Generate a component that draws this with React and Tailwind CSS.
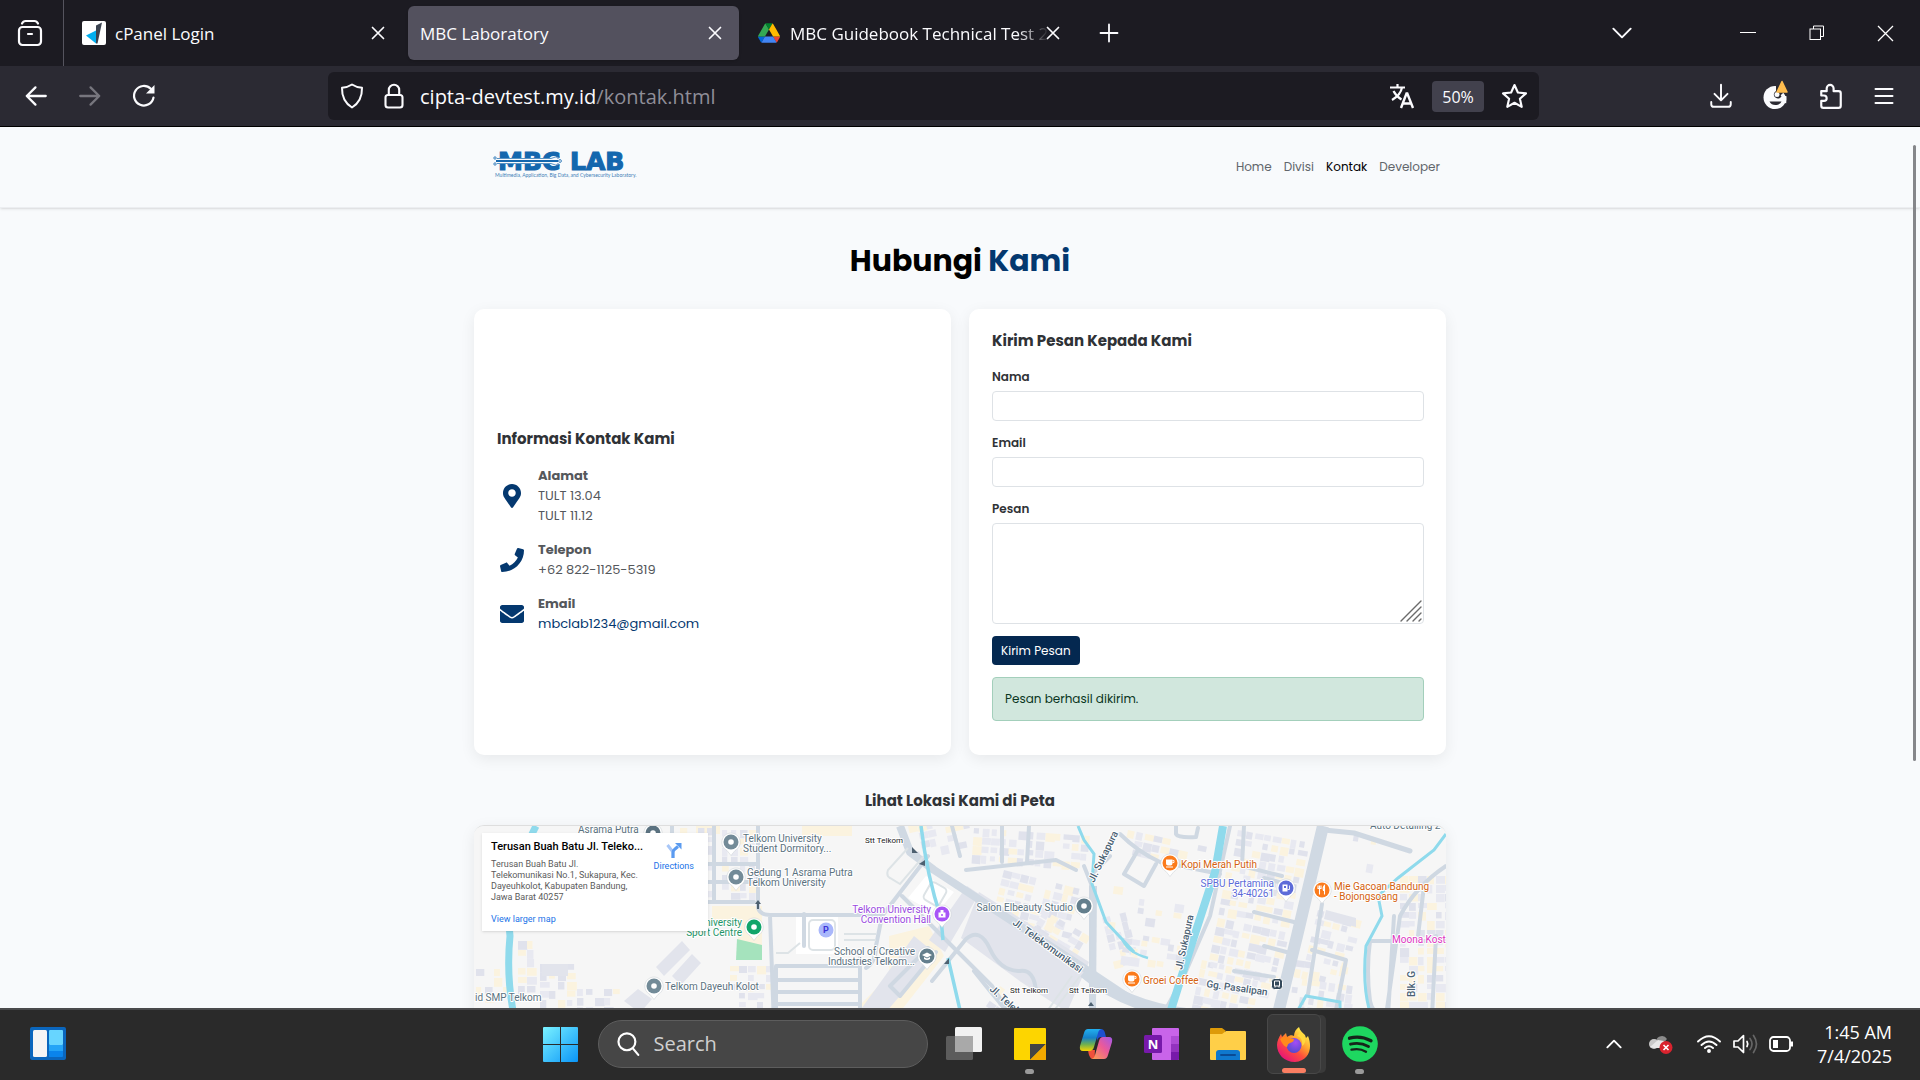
import React from "react";
import { FaMapMarkerAlt, FaPhone, FaEnvelope } from "react-icons/fa";

/* ---------- small helpers ---------- */

function Stroke({ size = 24, width = 2, children, className = "" }) {
  return (
    <svg
      width={size}
      height={size}
      viewBox="0 0 24 24"
      fill="none"
      stroke="currentColor"
      strokeWidth={width}
      strokeLinecap="round"
      strokeLinejoin="round"
      className={className}
      aria-hidden="true"
    >
      {children}
    </svg>
  );
}

function IconButton({ label, className = "", children }) {
  return (
    <button type="button" aria-label={label} className={"flex shrink-0 items-center justify-center " + className}>
      {children}
    </button>
  );
}

const CloseGlyph = () => (
  <Stroke size={24} width={1.7}>
    <path d="M6.5 6.5l11 11M17.5 6.5l-11 11" />
  </Stroke>
);

/* ---------- browser chrome ---------- */

function CpanelIcon() {
  return (
    <svg width="24" height="24" viewBox="0 0 24 24" aria-hidden="true">
      <rect width="24" height="24" rx="2" fill="#fff" />
      <path d="M4 14.500L14 9.500V22.500z" fill="#00aeef" />
      <path d="M14 4.500L20 1.500L15.500 22.500H14z" fill="#3b4350" />
    </svg>
  );
}

function DriveIcon() {
  return (
    <svg width="22" height="20" viewBox="0 0 87.3 78" aria-hidden="true">
      <path d="M6.600 66.850l3.850 6.650c.8 1.400 1.950 2.500 3.300 3.300L27.500 53H0c0 1.550.4 3.100 1.200 4.500z" fill="#0066da" />
      <path d="M43.650 25L29.900 1.200c-1.350.8-2.500 1.900-3.300 3.300L1.200 48.500C.4 49.900 0 51.450 0 53h27.500z" fill="#34a853" />
      <path d="M73.550 76.800c1.350-.8 2.500-1.900 3.300-3.300l1.600-2.750 7.650-13.250c.8-1.400 1.200-2.950 1.200-4.500H59.800l5.850 11.500z" fill="#ea4335" />
      <path d="M43.650 25L57.400 1.200C56.050.4 54.500 0 52.900 0H34.400c-1.600 0-3.150.45-4.500 1.200z" fill="#00832d" />
      <path d="M59.800 53H27.500L13.750 76.800c1.350.8 2.900 1.200 4.500 1.200h50.800c1.600 0 3.150-.45 4.500-1.200z" fill="#4285f4" />
      <path d="M73.400 26.500l-12.700-22c-.8-1.400-1.950-2.500-3.300-3.300L43.650 25 59.800 53h27.450c0-1.550-.4-3.100-1.200-4.500z" fill="#ffba00" />
    </svg>
  );
}

function TabBar() {
  return (
    <div className="flex h-[66px] items-center bg-[#1c1b22] text-[17px] text-[#fbfbfe]">
      <div className="flex h-full w-16 items-center justify-center border-r border-[#55545e] pr-1">
        <IconButton label="Recent tabs">
          <svg width="26" height="28" viewBox="0 0 26 28" fill="none" stroke="currentColor" strokeWidth="2.200" strokeLinecap="round" aria-hidden="true">
            <rect x="2" y="8" width="22" height="18" rx="3.500" />
            <path d="M5 4.500c1-2 2-2.500 3.500-2.500h9c1.500 0 2.500.5 3.500 2.500M11 15h4" />
          </svg>
        </IconButton>
      </div>
      <div className="flex h-[54px] w-[344px] items-center pl-[18px] pr-[18px]">
        <CpanelIcon />
        <span className="ml-[9px] flex-1 truncate pt-px">cPanel Login</span>
        <IconButton label="Close tab"><CloseGlyph /></IconButton>
      </div>
      <div className="flex h-[54px] w-[331px] items-center rounded-md bg-[#53515e] pl-3 pr-3 shadow">
        <span className="flex-1 truncate pt-px">MBC Laboratory</span>
        <IconButton label="Close tab"><CloseGlyph /></IconButton>
      </div>
      <div className="flex h-[54px] w-[333px] items-center pl-[19px] pr-[7px]">
        <DriveIcon />
        <span className="-mr-2 ml-[10px] w-0 flex-1 overflow-hidden whitespace-nowrap pt-px [mask-image:linear-gradient(to_right,black_88%,transparent_100%)]">
          MBC Guidebook Technical Test 2
        </span>
        <IconButton label="Close tab"><CloseGlyph /></IconButton>
      </div>
      <IconButton label="New tab" className="ml-[25px]">
        <Stroke size={24} width={1.8}><path d="M12 3.500v17M3.500 12h17" /></Stroke>
      </IconButton>
      <div className="ml-auto flex items-center">
        <IconButton label="List all tabs" className="w-[46px]">
          <Stroke size={26} width={1.800}><path d="M4 8l8 8 8-8" /></Stroke>
        </IconButton>
        <IconButton label="Minimize" className="ml-[68px] w-[69px]">
          <svg width="16" height="16" aria-hidden="true"><path d="M0 7.500h16" stroke="#fff" /></svg>
        </IconButton>
        <IconButton label="Restore" className="w-[69px]">
          <svg width="16" height="16" fill="none" stroke="#fff" aria-hidden="true">
            <rect x="1" y="4" width="10.500" height="10.500" />
            <path d="M4.500 4V1H14.500V11.500H11.500" />
          </svg>
        </IconButton>
        <IconButton label="Close window" className="w-[69px]">
          <svg width="17" height="17" fill="none" stroke="#fff" strokeWidth="1.300" aria-hidden="true"><path d="M1 1l15 15M16 1L1 16" /></svg>
        </IconButton>
      </div>
    </div>
  );
}

function Toolbar() {
  return (
    <div className="flex h-[61px] items-center border-b border-black bg-[#2b2a33] text-[#fbfbfe]">
      <div className="flex w-[328px] shrink-0 items-center gap-[28px] pl-[23px]">
        <IconButton label="Back"><Stroke size={26} width={2.100}><path d="M21 12H3.500M11.500 4L3.500 12l8 8" /></Stroke></IconButton>
        <IconButton label="Forward" className="text-[#77767e]"><Stroke size={26} width={2.100}><path d="M3 12h17.500M12.500 4l8 8-8 8" /></Stroke></IconButton>
        <IconButton label="Reload">
          <svg width="26" height="26" viewBox="0 0 26 26" fill="none" stroke="currentColor" strokeWidth="2.200" strokeLinecap="round" aria-hidden="true">
            <path d="M22.500 14.500a9.800 9.800 0 1 1-2.700-8.700" />
            <path d="M23.500 2v8.500H15z" fill="currentColor" stroke="none" />
          </svg>
        </IconButton>
      </div>
      <div className="flex h-12 w-[1211px] shrink items-center rounded-md bg-[#1c1b22] pl-[12px] pr-[11px]">
        <svg width="24" height="26" viewBox="0 0 24 26" fill="none" stroke="currentColor" strokeWidth="2" strokeLinejoin="round" className="shrink-0" aria-hidden="true">
          <path d="M12 1.500c3 2 6 3 10 3.300.2 8.500-2.500 15.200-10 19.700C4.500 20 1.800 13.300 2 4.800 6 4.500 9 3.500 12 1.500z" />
        </svg>
        <svg width="20" height="26" viewBox="0 0 20 26" fill="none" stroke="currentColor" strokeWidth="2.100" className="ml-[20px] shrink-0" aria-hidden="true">
          <rect x="1.500" y="12" width="17" height="12.500" rx="2.500" />
          <path d="M4.800 12V7a5.200 5.200 0 0 1 10.400 0v5" />
        </svg>
        <p className="ml-4 flex-1 truncate pt-0.5 text-[20px]">
          cipta-devtest.my.id<span className="text-[#8f8e98]">/kontak.html</span>
        </p>
        <IconButton label="Translate page">
          <svg width="26" height="26" viewBox="0 0 26 26" fill="none" stroke="currentColor" strokeWidth="2.200" aria-hidden="true">
            <path d="M1 4.500h15M8.500 1v3.500M3 17C8 14 12 10 13 4.500M4.500 8c2 4 4.500 6.500 8 8.500" />
            <path d="M12 25l5.500-14.500h.8L24 25M14 20.500h8" strokeWidth="2.400" />
          </svg>
        </IconButton>
        <button type="button" className="ml-[17px] h-[31px] w-[52px] rounded bg-[#42414d] pt-px text-base">50%</button>
        <IconButton label="Bookmark page" className="ml-[17px]">
          <Stroke size={27} width={1.900}>
            <path d="M12 1.800l3 6.600 7.200.8-5.400 4.800 1.600 7.200L12 17.600l-6.400 3.600 1.600-7.200-5.400-4.800 7.200-.8z" />
          </Stroke>
        </IconButton>
      </div>
      <div className="ml-auto flex items-center gap-[28px] pr-[24px]">
        <IconButton label="Downloads"><Stroke size={26} width={1.800}><path d="M12 1.500v14M6 10l6 6 6-6M3 17.500v2c0 1.500 1 2.500 2.500 2.500h13c1.500 0 2.500-1 2.500-2.500v-2" /></Stroke></IconButton>
        <IconButton label="Extension">
          <svg width="28" height="32" viewBox="0 0 28 32" aria-hidden="true">
            <circle cx="13" cy="17.500" r="11.500" fill="#fbfbfe" />
            <path d="M14 5v6a4 4 0 1 0 5 6l1-1h6V5z" fill="#2b2a33" />
            <circle cx="15" cy="14.500" r="2.500" fill="#fbfbfe" />
            <path d="M7.500 21.500h12c-2 4.500-10 5-12 0z" fill="#2b2a33" />
            <path d="M20 14a11 11 0 0 1 2.500 9" stroke="#fbfbfe" strokeWidth="3.500" fill="none" />
            <path d="M20 1.500l5 10.500h-10z" fill="#ffbd4f" stroke="#ffbd4f" strokeWidth="1.500" strokeLinejoin="round" />
          </svg>
        </IconButton>
        <IconButton label="Extensions">
          <Stroke size={26} width={2}>
            <path d="M3 7.500h5V5a3.200 3.200 0 0 1 6.400 0v2.500H19a2 2 0 0 1 2 2V21a2 2 0 0 1-2 2H5a2 2 0 0 1-2-2v-4.500h2.500a2.500 2.500 0 0 0 0-5H3z" />
          </Stroke>
        </IconButton>
        <IconButton label="Menu"><Stroke size={24} width={2}><path d="M3.500 5h17M3.500 12h17M3.500 19h17" /></Stroke></IconButton>
      </div>
    </div>
  );
}

/* ---------- contact page ---------- */

function MbcLogo() {
  return (
    <svg width="146" height="30" viewBox="0 0 146 30" className="overflow-visible" role="img" aria-label="MBC LAB">
      <g fill="#1467ae" stroke="#1467ae" strokeWidth="1.200" fontFamily="'DejaVu Sans', sans-serif" fontWeight="700">
        <text x="5" y="20" fontSize="25">MBC</text>
        <text x="77" y="20" fontSize="25">LAB</text>
      </g>
      <path d="M3 11h62" stroke="#f8fafc" strokeWidth="6" />
      <g stroke="#1467ae" fill="none">
        <path d="M3 11h62" strokeWidth="2" />
        <path d="M4 8.500h54l6-2M4 13.500h54l6 2" strokeWidth=".7" />
        <circle cx="2" cy="8" r="1.200" strokeWidth=".8" />
        <circle cx="2" cy="14" r="1.200" strokeWidth=".8" />
        <circle cx="67" cy="11" r="1.400" strokeWidth=".8" fill="#f8fafc" />
        <circle cx="65" cy="7" r="1.200" strokeWidth=".8" />
        <circle cx="65" cy="15" r="1.200" strokeWidth=".8" />
      </g>
      <text x="2" y="27" fontSize="5" fill="#3f7fb8" fontFamily="Lato, sans-serif">
        Multimedia, Application, Big Data, and Cybersecurity Laboratory.
      </text>
    </svg>
  );
}

function SiteHeader() {
  return (
    <header className="h-[81px] shrink-0 border-b border-[#eceef1] shadow-sm">
      <div className="mx-auto flex h-full max-w-[960px] items-center justify-between pl-[13px]">
        <a href="#home" className="mb-1"><MbcLogo /></a>
        <nav className="flex gap-3 text-[12px] text-[#61666b]">
          <a href="#home">Home</a>
          <a href="#divisi">Divisi</a>
          <a href="#kontak" className="text-black">Kontak</a>
          <a href="#developer">Developer</a>
        </nav>
      </div>
    </header>
  );
}

function ContactRow({ icon, title, children }) {
  return (
    <div className="flex items-center gap-[12px]">
      <span className="flex w-[29px] justify-center text-[24px] text-[#04386f]">{icon}</span>
      <div className="text-[13px] leading-5 text-[#55585c]">
        <p className="font-bold">{title}</p>
        {children}
      </div>
    </div>
  );
}

function Field({ id, label, type }) {
  return (
    <div className="mb-3">
      <label htmlFor={id} className="mb-1 block text-[12px] font-semibold leading-5">{label}</label>
      <input id={id} type={type} className="block h-[30px] w-full rounded border border-[#dee2e6] bg-white px-2 text-[12px]" />
    </div>
  );
}

function ContactCards() {
  return (
    <div className="grid grid-cols-2 gap-[18px] text-[#2f3236]">
      <section className="flex flex-col justify-center rounded-[10px] bg-white pb-[2px] pl-[23px] pr-[22px] shadow-[0_4px_15px_rgba(0,0,0,0.07)]">
        <h2 className="mb-[17px] text-[15px] font-bold leading-5">Informasi Kontak Kami</h2>
        <div className="flex flex-col gap-[14px]">
          <ContactRow icon={<FaMapMarkerAlt />} title="Alamat">
            <p>TULT 13.04</p>
            <p>TULT 11.12</p>
          </ContactRow>
          <ContactRow icon={<FaPhone />} title="Telepon">
            <p>+62 822-1125-5319</p>
          </ContactRow>
          <ContactRow icon={<FaEnvelope />} title="Email">
            <a href="mailto:mbclab1234@gmail.com" className="text-[#04386f]">mbclab1234@gmail.com</a>
          </ContactRow>
        </div>
      </section>
      <section className="rounded-[10px] bg-white pb-[34px] pl-[23px] pr-[22px] pt-[22px] shadow-[0_4px_15px_rgba(0,0,0,0.07)]">
        <h2 className="mb-4 text-[15px] font-bold leading-5">Kirim Pesan Kepada Kami</h2>
        <form onSubmit={(e) => e.preventDefault()}>
          <Field id="nama" label="Nama" type="text" />
          <Field id="email" label="Email" type="email" />
          <label htmlFor="pesan" className="mb-1 block text-[12px] font-semibold leading-5">Pesan</label>
          <div className="relative">
            <textarea id="pesan" className="block h-[101px] w-full resize-none rounded border border-[#dee2e6] bg-white p-2 text-[12px]" />
            <svg width="22" height="22" viewBox="0 0 22 22" stroke="#6b6b6b" strokeWidth="1.400" strokeLinecap="round" className="absolute bottom-[2px] right-[2px]" aria-hidden="true">
              <path d="M1 21L21 1M7 21L21 7M13 21l8-8M19 21l2-2" />
            </svg>
          </div>
          <button type="submit" className="mt-3 flex h-[29px] items-center rounded bg-[#042850] px-[9px] text-[12px] text-white">Kirim Pesan</button>
        </form>
        <p role="status" className="mt-3 flex h-11 items-center rounded border border-[#a3cfbb] bg-[#d1e7dd] px-3 text-[12px] text-[#0a3622]">Pesan berhasil dikirim.</p>
      </section>
    </div>
  );
}

/* ---------- map ---------- */

function buildings(x, y, w, h, angle, seed, density) {
  const out = [];
  let s = seed;
  const rnd = () => {
    s = (s * 16807) % 2147483647;
    return s / 2147483647;
  };
  for (let j = 0; j < h; j += 9) {
    for (let i = 0; i < w; i += 9) {
      const keep = rnd() < density;
      const bw = 5 + rnd() * 5;
      const bh = 5 + rnd() * 4;
      const tint = rnd();
      if (keep) {
        out.push(
          <rect
            key={i + "-" + j}
            x={i}
            y={j}
            width={bw}
            height={bh}
            fill={tint < 0.35 ? "#fbf3df" : tint < 0.7 ? "#e8e9f1" : "#e0e2ec"}
          />
        );
      }
    }
  }
  return <g key={seed} transform={`translate(${x} ${y}) rotate(${angle})`}>{out}</g>;
}

function Pin({ x, y, color, children }) {
  return (
    <g transform={`translate(${x} ${y})`}>
      <path d="M0 13.500L-4 8.500A9.200 9.200 0 1 1 4 8.500z" fill="#fff" stroke="#c9ced3" strokeWidth=".5" />
      <circle r="7.500" fill={color} />
      {children || <circle r="2.800" fill="#fff" />}
    </g>
  );
}

const Cup = () => (
  <g>
    <path d="M-4-3.500h6.500v4a2 2 0 0 1-2 2h-2.500a2 2 0 0 1-2-2zM-4 3.500h7v1h-7z" fill="#fff" />
    <path d="M2.500-2.500h1.500v2h-1.500" fill="none" stroke="#fff" strokeWidth=".9" />
  </g>
);

function Label({ x, y, color, lines, anchor = "start", size = 10, rotate = 0, weight = 400 }) {
  return (
    <text
      transform={`translate(${x} ${y}) rotate(${rotate})`}
      fill={color}
      fontSize={size}
      fontWeight={weight}
      textAnchor={anchor}
      stroke="#fff"
      strokeWidth="2"
      strokeLinejoin="round"
      paintOrder="stroke"
    >
      {lines.map((line, i) => (
        <tspan key={line} x="0" y={i * 10}>{line}</tspan>
      ))}
    </text>
  );
}

const GREY = "#5b7280";
const ROAD = "#4a6173";

function MapCanvas() {
  return (
    <svg viewBox="0 0 972 225" preserveAspectRatio="xMidYMin slice" className="block h-[225px] w-full" fontFamily="Roboto, sans-serif" role="img" aria-label="Map">
      <rect width="972" height="225" fill="#f6f6f6" />
      {/* plots and sports fields */}
      <path d="M222 0h24v8h-24zM238 80h50v42h-24V98h-26zM328 0h50v10h-50z" fill="#fbf3df" />
      <path d="M415 110l40-10 15 30-55 70-30-20 30-30z" fill="#fbf3df" />
      <path d="M263 113l25 6v15h-26z" fill="#a5e3bd" />
      <path d="M322 90h42v38h-42z" fill="#fff" />
      <path d="M452 50l28 16-18 22-28-16z" fill="#fff" />
      {/* housing blocks */}
      {buildings(206, 2, 34, 70, 0, 11, 0.6)}
      {buildings(248, 4, 32, 66, 0, 23, 0.7)}
      {buildings(44, 115, 14, 60, 0, 37, 0.8)}
      {buildings(66, 138, 30, 40, 0, 41, 0.8)}
      {buildings(2, 143, 30, 34, 0, 43, 0.5)}
      {buildings(103, 163, 40, 24, 0, 47, 0.7)}
      {buildings(256, 140, 44, 50, 0, 53, 0.8)}
      {buildings(434, 0, 60, 30, -12, 59, 0.5)}
      {buildings(500, 2, 110, 36, 4, 61, 0.9)}
      {buildings(530, 44, 80, 46, 14, 67, 0.9)}
      {buildings(570, 84, 50, 28, 30, 71, 0.9)}
      {buildings(628, 92, 26, 50, -14, 73, 0.8)}
      {buildings(654, 4, 80, 26, 12, 79, 0.8)}
      {buildings(640, 60, 70, 60, 8, 83, 0.2)}
      {buildings(650, 112, 56, 22, 8, 89, 0.7)}
      {buildings(764, 4, 70, 40, 10, 97, 0.9)}
      {buildings(752, 46, 72, 44, 10, 101, 0.8)}
      {buildings(744, 92, 72, 50, 12, 103, 0.9)}
      {buildings(728, 134, 66, 56, 12, 107, 0.8)}
      {buildings(844, 84, 40, 66, 14, 109, 0.7)}
      {buildings(822, 134, 60, 50, 8, 113, 0.6)}
      {buildings(926, 50, 50, 140, 0, 127, 0.8)}
      {buildings(526, 160, 80, 30, 35, 131, 0.4)}
      {buildings(880, 8, 70, 40, 10, 137, 0.08)}
      {/* large campus buildings */}
      <g fill="#e2e4ec">
        <path d="M208 115l8 9-26 26-8-9zM218 128l9 9-20 22-9-9z" />
        <path d="M493 60l12 8-34 58-16-12zM505 66l110 70-22 50-46-30-60-44z" />
        <path d="M440 110l22 18-62 72-18-10z" />
        <path d="M150 175l14-12 14 10-12 14zM68 138h26v12h-26zM852 84l30 8v9l-32-8z" />
      </g>
      {/* streets */}
      <g fill="none" stroke="#cfd8e2" strokeWidth="4" strokeLinejoin="round" strokeLinecap="round">
        <path d="M198 0v34M240 0v76M208 38h74M206 56h72M232 76h48M284 0v82q2 7 12 7h112M296 90l4 110" />
        <path d="M302 140h82M302 154h82M302 166h82M302 178h82M386 132v60M302 140v50" />
        <path d="M330 88v32M408 90l46-60M408 90l-6 30q0 16-10 22M428 70l90 90M440 82l-12-12M518 160l26 40M454 122l-38 38 10 10 36-44" />
        <path d="M492 113q14-12 24 10t30 22q14-2 16 20M500 145l16 20 30 36M492 113l-34 42" strokeWidth="4" />
        <path d="M478 0l8 30M492 44l90-10 20 10M528 0v36M555 0l-2 36M636 30l-20 20M617 60v110M610 40l8 20M617 170v20" />
        <path d="M646 8q18 18 40 28l60 12M664 24l-14 24 20 12 12-22M702 0v8q2 4 20 3l2-9M756 0l-20 90-26 60-22 40" />
        <path d="M790 52l30 8M780 86l40 10M790 120l30 8M760 145l40 6M770 0l-2 40 40 10M848 78l-14 90M838 124l34 10-10 50" />
        <path d="M850 4l30 3 56 18" strokeWidth="5" />
        <path d="M972 40q-30 20-46 50l-14 100M896 115q-4 30 0 60 4 20 30 14M896 115h76M920 90l-6 100M950 60l-6 50M962 110l-4 80" />
      </g>
      {/* main roads */}
      <g fill="none" stroke="#d0d9e3" strokeLinejoin="round">
        <path d="M426 0l10 26 24 18 150 98 60 40" strokeWidth="8" />
        <path d="M620 60l-1 122" strokeWidth="6" />
        <path d="M849 0l-26 110-22 90" strokeWidth="12" />
        <path d="M610 146q40 34 102 42" strokeWidth="12" />
      </g>
      {/* car parks */}
      <g fill="none" stroke="#dde3e6" strokeWidth="2">
        <rect x="335" y="94" width="26" height="30" rx="4" />
        <rect x="452" y="58" width="18" height="20" rx="4" transform="rotate(30 461 68)" />
        <path d="M434 22l-20 22q-2 6 2 8l10 6 24-28M370 108h32M370 114h32M302 127h12l12-10M606 150l-30 40M598 150l-24 34" />
      </g>
      {/* waterways */}
      <g fill="none" stroke="#8fdaec">
        <path d="M62 0Q30 60 36 110q-4 40 4 80" strokeWidth="7" />
        <path d="M447 0q6 50 20 92l2 22M474 132l12 52" strokeWidth="3.500" />
        <path d="M604 0l6 14 10 14-2 30 14 38 28 30" strokeWidth="3" />
        <path d="M749 0l-8 46-22 68-22 70" strokeWidth="8" />
        <path d="M648 112q4 14 26 20" strokeWidth="2.500" />
        <path d="M972 8l-12 16-36 28-20 18 4 20-16 30q-4 40 4 66M824 184l8-14 34 6v20" strokeWidth="3" />
      </g>
      <g fill="#4d6070">
        <path d="M284 74l3 4h-2v5h-2v-5h-2zM438 21l6 6-6 0zM451 40v-6l-6 4zM475 132v6l-5 0zM617 176l3 4h-6z" />
      </g>

      <Label x={104} y={7} color={GREY} lines={["Asrama Putra"]} size={10} />
      <Pin x={179} y={7} color={GREY} />
      <Pin x={257} y={16} color="#738b98" />
      <Label x={269} y={16} color={GREY} lines={["Telkom University", "Student Dormitory..."]} />
      <Pin x={262} y={51} color="#738b98" />
      <Label x={273} y={50} color={GREY} lines={["Gedung 1 Asrama Putra", "Telkom University"]} />
      <Label x={268} y={100} color="#1e9568" lines={["University", "Sport Centre"]} anchor="end" />
      <Pin x={280} y={101} color="#12a56b" />
      <Pin x={180} y={160} color="#738b98" />
      <Label x={191} y={164} color={GREY} lines={["Telkom Dayeuh Kolot"]} />
      <Label x={1} y={175} color={GREY} lines={["id SMP Telkom"]} />
      <Label x={391} y={17} color="#222" lines={["Stt Telkom"]} size={8} />
      <Label x={457} y={87} color="#9a4be0" lines={["Telkom University", "Convention Hall"]} anchor="end" />
      <Pin x={468} y={88} color="#a855f7">
        <path d="M-3.500-1.500h7v5h-7zM-1.500-4h3v2.500h-3z" fill="#fff" />
        <circle cy="1" r="1" fill="#a855f7" />
      </Pin>
      <circle cx="352" cy="104" r="8.500" fill="#fff" />
      <circle cx="352" cy="104" r="7.500" fill="#aab8fb" />
      <text x="352" y="107" fontSize="9" fontWeight="700" textAnchor="middle" fill="#3b32d8">P</text>
      <Label x={441} y={129} color={GREY} lines={["School of Creative", "Industries Telkom..."]} anchor="end" />
      <Pin x={453} y={130} color="#647f8d">
        <path d="M-5-1L0-3.500 5-1 0 1.500zM-3 1v2q3 2 6 0V1L0 2.500z" fill="#fff" />
      </Pin>
      <Label x={599} y={85} color={GREY} lines={["Salon Elbeauty Studio"]} anchor="end" />
      <Pin x={610} y={80} color="#647f8d" />
      <Label x={620} y={57} color={ROAD} lines={["Jl. Sukapura"]} rotate={-64} weight={500} />
      <Label x={538} y={98} color={ROAD} lines={["Jl. Telekomunikasi"]} rotate={36} weight={500} />
      <Label x={515} y={164} color={ROAD} lines={["Jl. Telekomunikasi"]} rotate={42} weight={500} />
      <Label x={536} y={167} color="#222" lines={["Stt Telkom"]} size={8} />
      <Label x={595} y={167} color="#222" lines={["Stt Telkom"]} size={8} />
      <Pin x={696} y={37} color="#fb7b1c"><Cup /></Pin>
      <Label x={707} y={42} color="#d4620f" lines={["Kopi Merah Putih"]} />
      <Label x={800} y={61} color="#5c6bd8" lines={["SPBU Pertamina", "34-40261"]} anchor="end" />
      <Pin x={812} y={62} color="#5c6bd8">
        <path d="M-3.500-3.500h5v7h-5z" fill="#fff" />
        <path d="M-2-2h2v2h-2z" fill="#5c6bd8" />
        <path d="M1.500 1.500h2v-4" fill="none" stroke="#fff" strokeWidth=".9" />
      </Pin>
      <Pin x={848} y={64} color="#fb7b1c">
        <path d="M-2.500-4.500v9M-4-4.500v3h3v-3M2.500 4.500v-9q-2 2-1 5h1" fill="none" stroke="#fff" strokeWidth="1.100" />
      </Pin>
      <Label x={860} y={64} color="#d4620f" lines={["Mie Gacoan Bandung", "- Bojongsoang"]} />
      <Label x={896} y={3} color={GREY} lines={["Auto Detailing 2"]} />
      <Label x={918} y={117} color="#dd35c1" lines={["Moona Kost"]} />
      <Pin x={658} y={153} color="#fb7b1c"><Cup /></Pin>
      <Label x={669} y={158} color="#d4620f" lines={["Groei Coffee"]} />
      <Label x={732} y={161} color={ROAD} lines={["Gg. Pasalipan"]} rotate={8} weight={500} />
      <Label x={708} y={144} color={ROAD} lines={["Jl. Sukapura"]} rotate={-78} weight={500} />
      <Label x={941} y={171} color={ROAD} lines={["Blk. G"]} rotate={-90} weight={500} />
      <g transform="translate(803 158)">
        <rect x="-5.500" y="-5.500" width="11" height="11" rx="3" fill="#34495a" stroke="#fff" />
        <path d="M-2.500-3h5v5h-5zM-2 2v1.500M2 2v1.500" fill="none" stroke="#fff" strokeWidth="1" />
      </g>
    </svg>
  );
}

function MapSection() {
  return (
    <section className="mt-9">
      <h2 className="mb-[14px] text-center text-[15px] font-bold leading-5 text-[#2f3236]">Lihat Lokasi Kami di Peta</h2>
      <div className="relative overflow-hidden rounded-[10px] border-t border-[#dedede] font-['Roboto',sans-serif] shadow-[0_4px_15px_rgba(0,0,0,0.08)]">
        <MapCanvas />
        <div className="absolute left-2 top-[7px] flex w-[226px] justify-between bg-white pb-[6px] pl-[9px] pr-[14px] pt-[7px] shadow">
          <div className="w-[152px] whitespace-nowrap text-[9px] leading-[11px] text-[#5b5b5b]">
            <p className="text-[11px] font-medium leading-[13px] text-black">Terusan Buah Batu Jl. Teleko...</p>
            <p className="mt-[6px]">
              Terusan Buah Batu Jl.<br />
              Telekomunikasi No.1, Sukapura, Kec.<br />
              Dayeuhkolot, Kabupaten Bandung,<br />
              Jawa Barat 40257
            </p>
            <a href="#map" className="mt-[11px] block text-[#1a73e8]">View larger map</a>
          </div>
          <a href="#directions" className="flex flex-col items-center gap-[3px] pt-[2px] text-[9px] leading-[11px] text-[#1a73e8]">
            <svg width="16" height="16" viewBox="0 0 16 16" fill="none" aria-hidden="true">
              <path d="M7 16V10L1.500 3" stroke="#a8c7f8" strokeWidth="3" />
              <path d="M7 16v-5.500q0-2 2-3.500l3-2.500" stroke="#5b9bf0" strokeWidth="3" />
              <path d="M9 1h6.500v6.500z" fill="#5b9bf0" />
            </svg>
            Directions
          </a>
        </div>
      </div>
    </section>
  );
}

/* ---------- taskbar ---------- */

function WidgetsIcon() {
  return (
    <svg width="36" height="34" viewBox="0 0 36 34" aria-hidden="true">
      <rect width="36" height="33" rx="2" fill="#0a66bd" />
      <rect x="3" y="3" width="14" height="27" rx="1.500" fill="#f5f5f5" />
      <rect x="19" y="3" width="14" height="15" rx="1" fill="#67d5ff" />
      <path d="M19 18h14v6H19z" fill="#23a4f7" />
      <path d="M19 24h14v5q0 1-1 1H19z" fill="#0a84ec" />
    </svg>
  );
}

function StartIcon() {
  return (
    <svg width="35" height="35" viewBox="0 0 35 35" aria-hidden="true">
      <defs>
        <linearGradient id="start" x1="0" y1="0" x2="1" y2="1">
          <stop offset="0" stopColor="#7af2ff" />
          <stop offset="1" stopColor="#0a95f8" />
        </linearGradient>
      </defs>
      <path d="M0 1q0-1 1-1h16v17H0zM18 0h16q1 0 1 1v16H18zM0 18h17v17H1q-1 0-1-1zM18 18h17v16q0 1-1 1H18z" fill="url(#start)" />
    </svg>
  );
}

function TaskViewIcon() {
  return (
    <svg width="36" height="34" viewBox="0 0 36 34" aria-hidden="true">
      <rect x="9" y="0" width="27" height="25" rx="1.500" fill="#f1f1f1" />
      <rect x="0" y="9" width="27" height="24" rx="1.500" fill="#5c5c5c" />
      <path d="M9 9h18v16H9z" fill="#a9a9a9" />
    </svg>
  );
}

function NotesIcon() {
  return (
    <svg width="32" height="32" viewBox="0 0 32 32" aria-hidden="true">
      <rect width="32" height="32" rx="1" fill="#fdd500" />
      <path d="M16 16h16L16 32z" fill="#444" />
      <path d="M32 16v15q0 1-1 1H16z" fill="#f2a900" />
    </svg>
  );
}

function CopilotIcon() {
  return (
    <svg width="34" height="32" viewBox="0 0 34 32" aria-hidden="true">
      <defs>
        <linearGradient id="cpA" x1="0" y1="0" x2="0" y2="1">
          <stop offset="0" stopColor="#22b0f0" />
          <stop offset=".4" stopColor="#1680c8" />
          <stop offset=".7" stopColor="#6fb050" />
          <stop offset="1" stopColor="#f5d400" />
        </linearGradient>
        <linearGradient id="cpB" x1="1" y1="0" x2="0" y2="1">
          <stop offset="0" stopColor="#a258e8" />
          <stop offset=".45" stopColor="#ec5a98" />
          <stop offset="1" stopColor="#fba54c" />
        </linearGradient>
      </defs>
      <path d="M17 1h5q3 0 4 4l1 4h-5q-3 0-4 4z" fill="#1d4fd0" />
      <path d="M9 22h7q-1 8 2 9h-5q-3-1-4-9z" fill="#f0503c" />
      <path d="M9 1h14q-3 0-4 4l-4 14q-1 4-5 4H4q-4 0-3-5L5 5q1-4 4-4z" fill="url(#cpA)" />
      <path d="M25 31H12q3 0 4-4l4-14q1-4 4-4h6q4 0 3 5l-4 13q-1 4-4 4z" fill="url(#cpB)" />
    </svg>
  );
}

function OneNoteIcon() {
  return (
    <svg width="36" height="32" viewBox="0 0 36 32" aria-hidden="true">
      <rect x="8" width="27" height="32" rx="1" fill="#c964ea" />
      <path d="M27 8h8v8h-8z" fill="#ae4bd5" />
      <path d="M27 16h8v8h-8z" fill="#9332bf" />
      <path d="M27 24h8v7q0 1-1 1h-7z" fill="#7719aa" />
      <rect x="0" y="7" width="18" height="18" rx="1.500" fill="#7719aa" />
      <text x="9" y="20.500" fontSize="13" fontWeight="700" fill="#fff" textAnchor="middle" fontFamily="'Open Sans', sans-serif">N</text>
    </svg>
  );
}

function ExplorerIcon() {
  return (
    <svg width="36" height="32" viewBox="0 0 36 32" aria-hidden="true">
      <path d="M0 1q0-1 1-1h11l4 3h-1v6H0z" fill="#dd9a08" />
      <path d="M0 6h12l4-3h19q1 0 1 1v27q0 1-1 1H1q-1 0-1-1z" fill="#ffcf48" />
      <path d="M6 32v-7q0-3 3-3h18q3 0 3 3v7z" fill="#0f78ce" />
      <path d="M11 27h14" stroke="#0a4a94" strokeWidth="2" strokeLinecap="round" />
    </svg>
  );
}

function FirefoxIcon() {
  return (
    <svg width="34" height="35" viewBox="0 0 34 35" aria-hidden="true">
      <defs>
        <linearGradient id="ffA" x1=".85" y1=".1" x2=".2" y2=".95">
          <stop offset="0" stopColor="#fff44f" />
          <stop offset=".35" stopColor="#ffa22e" />
          <stop offset=".6" stopColor="#ff4f3c" />
          <stop offset="1" stopColor="#e6107c" />
        </linearGradient>
        <radialGradient id="ffB" cx=".6" cy=".3" r=".8">
          <stop offset="0" stopColor="#a44df5" />
          <stop offset="1" stopColor="#4a49c9" />
        </radialGradient>
      </defs>
      <path d="M22 0c1 4 4 6 6 8l1 3 2-2c5 12 1 25-13 26C7 35 0 27 0 18c0-4 2-8 4-11l1 3 4-4 1 4c3-2 5-2 7-1 0-4 2-7 5-9z" fill="url(#ffA)" />
      <circle cx="17" cy="18.500" r="7.500" fill="url(#ffB)" />
      <path d="M3 12c4-3 6-3 9-1l5 1c0 2-1 3-4 4-3 1-2 3-3 4-3 0-5-4-7-8z" fill="#ff8a1c" />
      <path d="M20 9c4 1 6 5 5 10 5-3 4-10-1-14z" fill="#ffd93c" />
    </svg>
  );
}

function SpotifyIcon() {
  return (
    <svg width="36" height="36" viewBox="0 0 36 36" fill="none" stroke="#16241a" strokeLinecap="round" aria-hidden="true">
      <circle cx="18" cy="18" r="17.800" fill="#1ed760" stroke="none" />
      <path d="M7.500 12.200q11-3 21.500 2.600" strokeWidth="3.300" />
      <path d="M8.500 18.200q9.500-2.500 18 2.300" strokeWidth="2.800" />
      <path d="M9.500 23.700q8-2 14.500 2" strokeWidth="2.300" />
    </svg>
  );
}

function TaskApp({ label, running, children }) {
  return (
    <button type="button" aria-label={label} className="relative flex h-full w-[54px] shrink-0 items-center justify-center">
      {children}
      {running ? <span className="absolute bottom-0 h-[5px] w-[9px] rounded-full bg-[#9a9a9a]" /> : null}
    </button>
  );
}

function Taskbar() {
  return (
    <footer className="grid h-[72px] shrink-0 grid-cols-[1fr_auto_1fr] border-t-2 border-[#4a4a4c] bg-[#2a2a2a] pb-[2px] text-white">
      <div className="flex items-center pl-[30px]">
        <button type="button" aria-label="Widgets"><WidgetsIcon /></button>
      </div>
      <div className="flex h-[60px] items-center self-center pl-[9px]">
        <button type="button" aria-label="Start" className="mr-5 shrink-0"><StartIcon /></button>
        <label className="mr-[9px] flex h-12 w-[330px] items-center rounded-full border border-[#5d5d5d] bg-[#464646] px-4">
          <Stroke size={26} width={2}><circle cx="11" cy="10" r="7.800" /><path d="M16.500 16l5 6" /></Stroke>
          <input type="search" aria-label="Search" placeholder="Search" className="ml-[13px] w-0 flex-1 bg-transparent text-[20px] placeholder-[#d0d0d0] outline-none" />
        </label>
        <div className="flex h-full items-center gap-3">
          <TaskApp label="Task View"><TaskViewIcon /></TaskApp>
          <TaskApp label="Sticky Notes" running><NotesIcon /></TaskApp>
          <TaskApp label="Copilot"><CopilotIcon /></TaskApp>
          <TaskApp label="OneNote"><OneNoteIcon /></TaskApp>
          <TaskApp label="File Explorer"><ExplorerIcon /></TaskApp>
          <button type="button" aria-label="Firefox" className="relative flex h-full w-[54px] shrink-0 items-center justify-center rounded-md border border-[#484848] bg-[#383838] shadow-[6px_0_0_-1px_#3a3a3a]">
            <FirefoxIcon />
            <span className="absolute bottom-0 h-[5px] w-6 rounded-full bg-[#fb7e62]" />
          </button>
          <TaskApp label="Spotify" running><SpotifyIcon /></TaskApp>
        </div>
      </div>
      <div className="flex items-center justify-end pr-7">
        <IconButton label="Hidden icons"><Stroke size={20} width={2.300}><path d="M4 16l8-8 8 8" /></Stroke></IconButton>
        <svg width="26" height="22" viewBox="0 0 26 22" className="ml-6" aria-hidden="true">
          <path d="M8 8a6 6 0 0 1 11-2l-8 9z" fill="#8b8b8b" />
          <circle cx="6" cy="11" r="5" fill="#c9c9c9" />
          <path d="M2 14l8-7 6 1v7H6z" fill="#e8e8e8" />
          <circle cx="18" cy="14.500" r="6.500" fill="#d9232e" />
          <path d="M15.500 12l5 5M20.500 12l-5 5" stroke="#fff" strokeWidth="1.600" />
        </svg>
        <svg width="24" height="18" viewBox="0 0 24 18" fill="none" stroke="#fff" strokeWidth="1.900" strokeLinecap="round" className="ml-[23px]" aria-hidden="true">
          <path d="M1 6.500q11-10.500 22 0M4.500 10q7.500-7 15 0M8 13q4-3.500 8 0" />
          <circle cx="12" cy="16" r="1" fill="#fff" />
        </svg>
        <svg width="25" height="20" viewBox="0 0 25 20" fill="none" stroke="#fff" strokeWidth="1.700" strokeLinecap="round" strokeLinejoin="round" className="ml-3" aria-hidden="true">
          <path d="M1 7v6h4l5.500 5.500v-17L5 7zM14 7.500q1.500 2.500 0 5" />
          <path d="M17 4.500q4 5.500 0 11M20.500 1.500q6 8.500 0 17" stroke="#666" />
        </svg>
        <svg width="25" height="16" viewBox="0 0 25 16" fill="none" stroke="#fff" strokeWidth="1.800" className="ml-[11px]" aria-hidden="true">
          <rect x="1" y="1" width="20" height="14" rx="3.500" />
          <path d="M4 4h5v8H4z" fill="#fff" stroke="none" />
          <path d="M22.500 5.500v5" strokeWidth="3" />
        </svg>
        <time className="ml-[18px] w-20 text-right text-[18px] leading-6">
          1:45 AM<br />7/4/2025
        </time>
      </div>
    </footer>
  );
}

export default function App() {
  return (
    <div className="flex h-screen flex-col overflow-hidden font-['Segoe_UI','Open_Sans',sans-serif]">
      <TabBar />
      <Toolbar />
      <main className="relative flex min-h-0 flex-1 flex-col overflow-hidden bg-[#f8fafc] font-['Poppins','Inter',sans-serif]">
        <SiteHeader />
        <div className="mx-auto w-full max-w-[972px] pt-8">
          <h1 className="mb-[27px] text-center text-[30px] font-bold leading-[42px] text-black">
            Hubungi <span className="text-[#04386f]">Kami</span>
          </h1>
          <ContactCards />
          <MapSection />
        </div>
        <span className="absolute right-1 top-[18px] h-[616px] w-[3px] rounded-full bg-[#85868a]" />
      </main>
      <Taskbar />
    </div>
  );
}
